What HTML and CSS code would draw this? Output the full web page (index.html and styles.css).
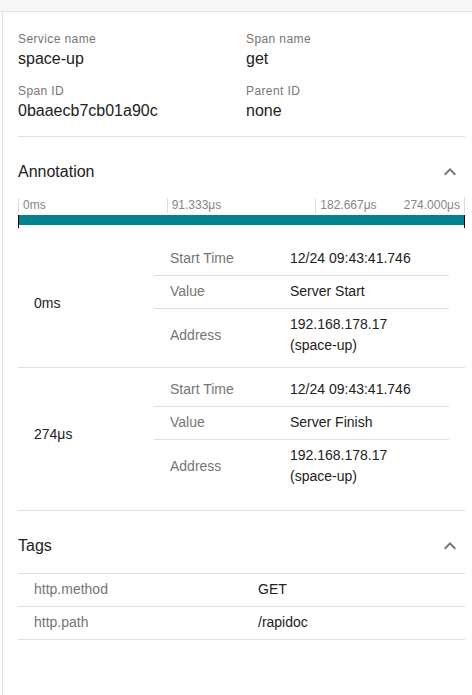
FILE: index.html
```html
<!DOCTYPE html>
<html>
<head>
<meta charset="utf-8">
<link rel="stylesheet" href="styles.css">
</head>
<body>
<div class="topbar"></div>
<div class="panel">
  <div class="info">
    <div class="field"><div class="flabel">Service name</div><div class="fvalue">space-up</div></div>
    <div class="field"><div class="flabel">Span name</div><div class="fvalue">get</div></div>
    <div class="field"><div class="flabel">Span ID</div><div class="fvalue">0baaecb7cb01a90c</div></div>
    <div class="field"><div class="flabel">Parent ID</div><div class="fvalue">none</div></div>
  </div>

  <div class="section annotation">
    <div class="sec-head">
      <span class="sec-title">Annotation</span>
      <svg class="chev" viewBox="0 0 24 24" width="24" height="24"><path d="M12 8l-6 6 1.41 1.41L12 10.83l4.59 4.58L18 14z" fill="#757575"/></svg>
    </div>
    <div class="ticks">
      <div class="tick"><span>0ms</span></div>
      <div class="tick"><span>91.333μs</span></div>
      <div class="tick tick-last"><span>182.667μs</span><span>274.000μs</span></div>
    </div>
    <div class="barwrap"><div class="bar"></div></div>

    <div class="group group-first">
      <div class="gtime">0ms</div>
      <div class="rows">
        <div class="row"><div class="key">Start Time</div><div class="val">12/24 09:43:41.746</div></div>
        <div class="row"><div class="key">Value</div><div class="val">Server Start</div></div>
        <div class="row"><div class="key">Address</div><div class="val">192.168.178.17<br>(space-up)</div></div>
      </div>
    </div>
    <div class="group group-last">
      <div class="gtime">274μs</div>
      <div class="rows">
        <div class="row"><div class="key">Start Time</div><div class="val">12/24 09:43:41.746</div></div>
        <div class="row"><div class="key">Value</div><div class="val">Server Finish</div></div>
        <div class="row"><div class="key">Address</div><div class="val">192.168.178.17<br>(space-up)</div></div>
      </div>
    </div>
  </div>

  <div class="section tags">
    <div class="sec-head">
      <span class="sec-title">Tags</span>
      <svg class="chev" viewBox="0 0 24 24" width="24" height="24"><path d="M12 8l-6 6 1.41 1.41L12 10.83l4.59 4.58L18 14z" fill="#757575"/></svg>
    </div>
    <div class="tagtable">
      <div class="tagrow"><div class="tkey">http.method</div><div class="tval">GET</div></div>
      <div class="tagrow"><div class="tkey">http.path</div><div class="tval">/rapidoc</div></div>
    </div>
  </div>
</div>
</body>
</html>
```

FILE: styles.css
```css
html, body {
  margin: 0;
  padding: 0;
  background: #ffffff;
  font-family: "Liberation Sans", Arial, sans-serif;
  color: #212121;
}

.topbar {
  height: 11px;
  background: #f6f6f6;
  border-bottom: 1px solid #e0e0e0;
}

.panel {
  margin-left: 2px;
  border-left: 1px solid #e0e0e0;
  padding: 0 7px 0 15px;
  min-height: 683px;
  box-sizing: border-box;
}

.info {
  display: grid;
  grid-template-columns: 228px 1fr;
  row-gap: 14px;
  padding: 19px 0 15px;
  border-bottom: 1px solid #e0e0e0;
}

.flabel {
  font-size: 12px;
  line-height: 16px;
  color: #757575;
  letter-spacing: 0.4px;
}

.fvalue {
  font-size: 16px;
  line-height: 20px;
  margin-top: 2px;
  color: #212121;
}

.section {
  padding-top: 23px;
}

.sec-head {
  display: flex;
  justify-content: space-between;
  align-items: center;
  height: 24px;
}

.sec-title {
  font-size: 16px;
  line-height: 24px;
  color: #212121;
}

.chev {
  display: block;
  margin-right: 3px;
}

.ticks {
  display: grid;
  grid-template-columns: 1fr 1fr 1fr;
  margin-top: 13px;
  border-right: 1px solid #dddddd;
  height: 16px;
}

.tick {
  border-left: 1px solid #dddddd;
  font-size: 12px;
  color: #868686;
  padding-left: 4px;
  display: flex;
  justify-content: space-between;
  height: 15px;
  margin-top: 1px;
  align-items: flex-end;
}

.tick span {
  line-height: 16px;
}

.tick-last {
  padding-right: 4px;
}

.barwrap {
  margin-top: 2px;
  height: 13px;
  border-left: 1px solid #000;
  border-right: 1px solid #000;
}

.bar {
  height: 10px;
  background: #00838f;
}

.group {
  display: flex;
  padding: 6px 0 5px;
  border-bottom: 1px solid #e0e0e0;
}

.group-first {
  margin-top: 9px;
}

.group-last {
  padding-bottom: 17px;
}

.gtime {
  width: 136px;
  box-sizing: border-box;
  padding-left: 16px;
  display: flex;
  align-items: center;
  font-size: 14px;
  color: #212121;
}

.rows {
  flex: 1;
  margin-right: 16px;
}

.row {
  display: flex;
  align-items: center;
  padding: 5px 0 6px;
  border-bottom: 1px solid #e0e0e0;
  font-size: 14px;
  line-height: 21px;
}

.row:last-child {
  border-bottom: none;
}

.key {
  width: 136px;
  box-sizing: border-box;
  padding-left: 16px;
  color: #757575;
}

.val {
  flex: 1;
  color: #212121;
}

.tagtable {
  margin-top: 15px;
  border-top: 1px solid #e0e0e0;
}

.tagrow {
  display: flex;
  padding: 5px 0 6px;
  border-bottom: 1px solid #e0e0e0;
  font-size: 14px;
  line-height: 21px;
}

.tkey {
  width: 240px;
  box-sizing: border-box;
  padding-left: 16px;
  color: #757575;
}

.tval {
  flex: 1;
  color: #212121;
}
```
